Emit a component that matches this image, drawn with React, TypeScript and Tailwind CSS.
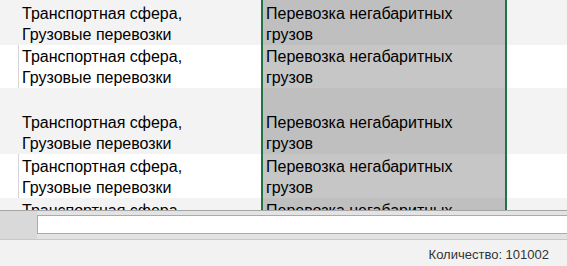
import React from "react"

type Row = { h: number; alt: boolean; a: [string, string]; b: [string, string] }

const A: [string, string] = ["Транспортная сфера,", "Грузовые перевозки"]
const B: [string, string] = ["Перевозка негабаритных", "грузов"]

const ROWS: Row[] = [
  { h: 45, alt: true, a: A, b: B },
  { h: 43, alt: false, a: A, b: B },
  { h: 66, alt: true, a: A, b: B },
  { h: 44, alt: false, a: A, b: B },
  { h: 44, alt: true, a: A, b: B },
]

function Cell({ lines }: { lines: [string, string] }) {
  return (
    <div className="flex h-full flex-col justify-end pl-[3px] leading-[21px]">
      <span>{lines[0]}</span>
      <span>{lines[1]}</span>
    </div>
  )
}

export default function App() {
  return (
    <div
      className="flex h-[266px] w-[567px] flex-col overflow-hidden bg-white text-black"
      style={{ fontFamily: '"Liberation Sans", Arial, sans-serif' }}
    >
      {/* sheet rows */}
      <div className="h-[210px] shrink-0 overflow-hidden text-[16px]">
        {ROWS.map((r, i) => (
          <div
            key={i}
            className={`flex ${r.alt ? "bg-[#f3f3f3]" : "bg-white"}`}
            style={{ height: r.h }}
          >
            <div className="w-[18px] shrink-0" />
            <div
              className={`w-[243px] shrink-0 border-l ${
                r.alt ? "border-transparent" : "border-[#d4d4d4]"
              }`}
            >
              <Cell lines={r.a} />
            </div>
            <div
              className={`w-[246px] shrink-0 border-x-2 border-[#217346] ${
                r.alt ? "bg-[#bfbfbf]" : "bg-[#c6c6c6]"
              }`}
            >
              <Cell lines={r.b} />
            </div>
            <div className="flex-1" />
          </div>
        ))}
      </div>

      {/* input bar */}
      <div className="flex h-[29px] shrink-0 border-t border-[#a6a6a6] bg-[#e3e3e3]">
        <div className="w-[37px] shrink-0 bg-[#d9d9d9]" />
        <div className="flex-1 pt-[4px]">
          <div className="h-[19px] border border-r-0 border-[#ababab] bg-white" />
        </div>
      </div>

      {/* status bar */}
      <div className="flex flex-1 items-center justify-end border-t border-[#c8c8c8] bg-[#f2f2f2] pr-[18px] pt-[3px] text-[13px] text-[#333]">
        Количество: 101002
      </div>
    </div>
  )
}
